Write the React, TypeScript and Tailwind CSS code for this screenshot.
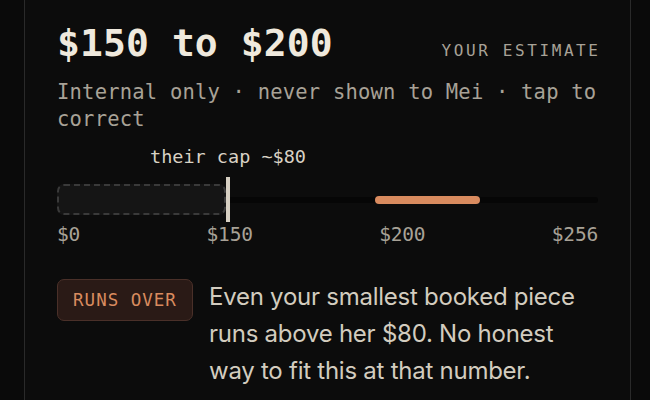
import React from "react";

const MONO = "font-['DejaVu_Sans_Mono','Liberation_Mono',monospace]";

export default function App() {
  return (
    <div className="w-[650px] h-[400px] overflow-hidden bg-[#0a0a0a]">
      <div className="ml-[24px] w-[607px] h-[400px] border-x border-[#2a2a2a] bg-[#0c0c0c] px-[32px] pt-[21px]">
        <div className="flex items-baseline justify-between">
          <div
            className={`${MONO} text-[38px] leading-[44px] font-bold text-[#efe9dd] tracking-[0.1px]`}
          >
            $150 to $200
          </div>
          <div className={`${MONO} text-[16px] tracking-[2.6px] text-[#a8a297] mr-[-2.6px]`}>
            YOUR ESTIMATE
          </div>
        </div>
        <div className={`${MONO} mt-[14px] text-[20.5px] leading-[27px] text-[#a8a297] tracking-[0.2px]`}>
          Internal only · never shown to Mei · tap to correct
        </div>

        <div className="mt-[12px]">
          <div className="h-[32px] relative">
            <div
              className={`${MONO} absolute top-0 left-[171px] -translate-x-1/2 whitespace-nowrap text-[18.5px] leading-[24px] text-[#d9d2c5]`}
            >
              their cap ~$80
            </div>
          </div>
          <div className="relative h-[46px]">
            <div className="absolute left-0 right-0 top-[20px] h-[6px] rounded-full bg-[#060606]" />
            <div className="absolute left-0 top-[7px] w-[169px] h-[31px] rounded-[7px] border-2 border-dashed border-[#3a3a3a] bg-[#151515]" />
            <div className="absolute left-[318px] w-[105px] top-[19px] h-[8px] rounded-full bg-[#d98b5f]" />
            <div className="absolute left-[169px] top-0 h-[45px] w-[4px] bg-[#d6cfc2]" />
          </div>
          <div className={`${MONO} flex justify-between text-[19.5px] leading-[24px] text-[#a8a297] tracking-[-0.2px]`}>
            <span>$0</span>
            <span>$150</span>
            <span>$200</span>
            <span>$256</span>
          </div>
        </div>

        <div className="mt-[33px] flex items-start gap-[16px]">
          <div
            className={`${MONO} shrink-0 mt-[-1px] rounded-[7px] border border-[#4a3029] bg-[#2a1a16] w-[136px] h-[42px] flex items-center justify-center text-[17.5px] tracking-[1px] text-[#d98b5f]`}
          >
            RUNS OVER
          </div>
          <div className="font-['Inter','Noto_Sans',sans-serif] text-[24px] leading-[37px] text-[#d3ccbf] tracking-[-0.25px] mt-[-2px]">
            Even your smallest booked piece runs above her $80. No honest way to fit this at that number.
          </div>
        </div>
      </div>
    </div>
  );
}
